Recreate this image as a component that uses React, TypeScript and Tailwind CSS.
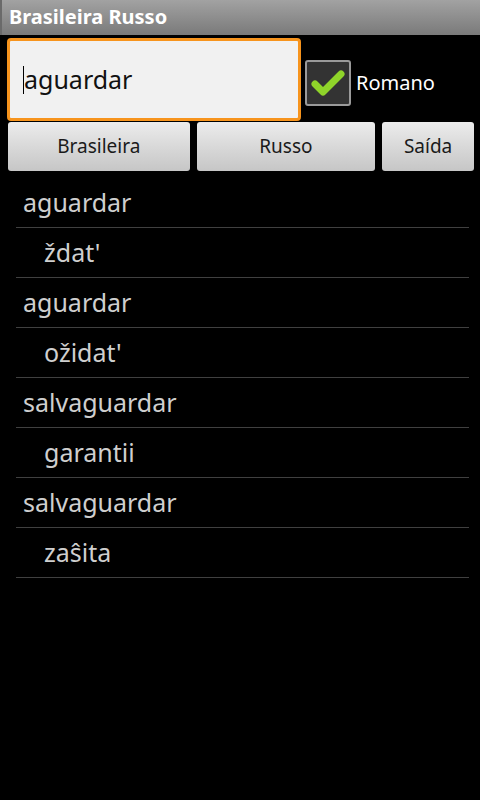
import React from "react";

const rows = [
  { t: "aguardar", sub: false },
  { t: "ždat'", sub: true },
  { t: "aguardar", sub: false },
  { t: "ožidat'", sub: true },
  { t: "salvaguardar", sub: false },
  { t: "garantii", sub: true },
  { t: "salvaguardar", sub: false },
  { t: "zaŝita", sub: true },
];

export default function App() {
  return (
    <div
      className="w-[480px] h-[800px] bg-black overflow-hidden"
      style={{ fontFamily: '"Noto Sans", "Open Sans", sans-serif' }}
    >
      <div className="h-[35px] flex items-center pl-[7px] pb-[2px] bg-gradient-to-b from-[#a2a2a2] to-[#7a7a7a] border-l-2 border-[#6a6a6a]">
        <span className="text-white font-bold text-[20px] leading-none">Brasileira Russo</span>
      </div>

      <div className="flex items-center pt-[3px] pl-[7px]">
        <div className="w-[294px] h-[83px] border-[3px] border-[#f7941d] rounded-[4px] bg-[#f1f1f1] flex items-center pl-[13px]">
          <span className="w-[1px] h-[28px] bg-black"></span>
          <span className="text-[25px] text-[#111] leading-none">aguardar</span>
        </div>
        <div className="ml-[4px] mt-[6px] w-[46px] h-[46px] rounded-[3px] border-2 border-[#9a9a9a] bg-[#333333] flex items-center justify-center">
          <svg width="34" height="30" viewBox="0 0 34 30">
            <path
              d="M4 16 L12 24 L30 6"
              fill="none"
              stroke="#8fd42a"
              strokeWidth="7"
              strokeLinecap="round"
              strokeLinejoin="round"
            />
          </svg>
        </div>
        <span className="ml-[5px] mt-[6px] text-white text-[20px] leading-none">Romano</span>
      </div>

      <div className="flex pl-[8px] pr-[6px] mt-[1px] h-[49px]">
        <button className="w-[182px] h-full rounded-[3px] bg-gradient-to-b from-[#ececec] to-[#c6c6c6] text-[#1a1a1a] text-[19px]">
          Brasileira
        </button>
        <button className="ml-[7px] w-[179px] h-full rounded-[3px] bg-gradient-to-b from-[#ececec] to-[#c6c6c6] text-[#1a1a1a] text-[19px]">
          Russo
        </button>
        <button className="ml-[7px] w-[92px] h-full rounded-[3px] bg-gradient-to-b from-[#ececec] to-[#c6c6c6] text-[#1a1a1a] text-[19px]">
          Saída
        </button>
      </div>

      <div className="mt-[7px] pl-[16px] pr-[11px]">
        {rows.map((r, i) => (
          <div
            key={i}
            className={`h-[50px] border-b border-[#404040] flex items-center ${r.sub ? "pl-[28px]" : "pl-[7px]"}`}
          >
            <span className="text-[25px] text-[#cfcfcf] leading-none">{r.t}</span>
          </div>
        ))}
      </div>
    </div>
  );
}
